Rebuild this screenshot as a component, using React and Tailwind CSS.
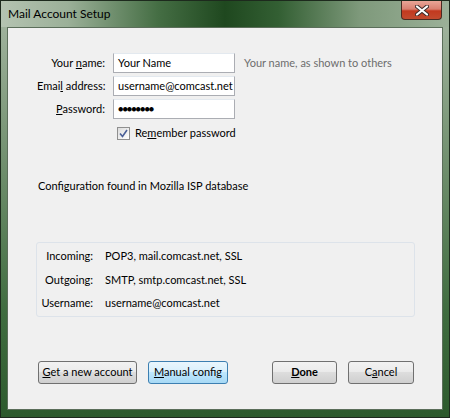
const font = { fontFamily: 'Lato, "Noto Sans", sans-serif' }

function Btn({ children, className = '', hover = false, bold = false }) {
  return (
    <button
      className={`h-[23px] rounded-[3px] border text-[11px] text-black whitespace-nowrap flex items-center justify-center ${
        hover
          ? 'border-[#3c7fb1] bg-[linear-gradient(#eaf6fd_0%,#d9f0fc_45%,#bee6fd_50%,#a7d9f5_100%)]'
          : 'border-[#707070] bg-[linear-gradient(#f2f2f2_0%,#ebebeb_45%,#dddddd_50%,#cfcfcf_100%)]'
      } ${bold ? 'font-bold' : ''} ${className}`}
    >
      {children}
    </button>
  )
}

function Field({ children }) {
  return (
    <div className="h-[20px] w-[122px] border border-[#abadb3] border-t-[#e3e9ef] bg-white flex items-center px-[4px] text-[11px] text-black whitespace-nowrap overflow-hidden">
      {children}
    </div>
  )
}

export default function App() {
  return (
    <div
      className="relative w-[450px] h-[418px] border border-[#1d2a1d] bg-[linear-gradient(180deg,#a7b8a4_0%,#7d987a_30%,#3f6c3f_75%,#2d5a2d_100%)] overflow-hidden"
      style={font}
    >
      {/* title bar */}
      <div className="h-[26px] flex items-center pl-[7px] bg-[linear-gradient(90deg,#b4c3b1_0%,#9bb098_15%,#456e44_35%,#1f481f_50%,#335f33_62%,#7e997b_80%,#9bb098_100%)]">
        <span className="text-[12px] text-black">Mail Account Setup</span>
      </div>
      <div className="absolute top-0 right-[7px] w-[41px] h-[19px] rounded-b-[4px] border border-t-0 border-[#4a2a22] bg-[linear-gradient(180deg,#e9a597_0%,#d98070_45%,#c2391f_55%,#c24a2e_100%)] flex items-center justify-center">
        <svg width="14" height="11" viewBox="0 0 14 11">
          <path d="M2 1.5 L12 9.5 M12 1.5 L2 9.5" stroke="#3a2a28" strokeWidth="4" strokeLinecap="round" />
          <path d="M2 1.5 L12 9.5 M12 1.5 L2 9.5" stroke="#ffffff" strokeWidth="2.2" strokeLinecap="round" />
        </svg>
      </div>

      {/* client area */}
      <div className="mx-[6px] h-[383px] border border-[#5b6e5a] bg-[#f0f0f0] flex flex-col">
        <div className="pt-[25px] pl-[29px] grid grid-cols-[68px_122px_auto] gap-x-[8px] gap-y-[3px] items-center text-[11px]">
          <span className="text-right whitespace-nowrap">Your <u>n</u>ame:</span>
          <Field>Your Name</Field>
          <span className="pl-[1px] text-[#6d6d6d] whitespace-nowrap">Your name, as shown to others</span>

          <span className="text-right whitespace-nowrap">Emai<u>l</u> address:</span>
          <Field>username@comcast.net</Field>
          <span />

          <span className="text-right whitespace-nowrap"><u>P</u>assword:</span>
          <Field>
            <span className="tracking-[-1px] text-[9px]">●●●●●●●●</span>
          </Field>
          <span />
        </div>

        <div className="mt-[6px] pl-[109px] flex items-center gap-[5px] text-[11px]">
          <span className="w-[13px] h-[13px] border border-[#8f8f8f] bg-[linear-gradient(135deg,#dcdcdc,#ffffff)] flex items-center justify-center">
            <svg width="9" height="9" viewBox="0 0 9 9">
              <path d="M1 4.5 L3.5 7.5 L8 1" fill="none" stroke="#4a5f97" strokeWidth="1.6" />
            </svg>
          </span>
          <span>Re<u>m</u>ember password</span>
        </div>

        <div className="mt-[36px] pl-[30px] text-[11px]">Configuration found in Mozilla ISP database</div>

        <div className="mt-[48px] ml-[28px] w-[379px] h-[75px] border border-[#dde3ea] rounded-[3px] pt-[5px] grid grid-cols-[56px_auto] gap-x-[12px] gap-y-[7px] text-[11px] content-start">
          <span className="text-right">Incoming:</span>
          <span>POP3, mail.comcast.net, SSL</span>
          <span className="text-right">Outgoing:</span>
          <span>SMTP, smtp.comcast.net, SSL</span>
          <span className="text-right">Username:</span>
          <span>username@comcast.net</span>
        </div>

        <div className="mt-[44px] pl-[30px] flex items-center">
          <Btn className="w-[99px]"><span><u>G</u>et a new account</span></Btn>
          <Btn hover className="w-[80px] ml-[11px]"><span><u>M</u>anual config</span></Btn>
          <Btn bold className="w-[65px] ml-[44px]"><span><u>D</u>one</span></Btn>
          <Btn className="w-[66px] ml-[11px]"><span>C<u>a</u>ncel</span></Btn>
        </div>
      </div>
    </div>
  )
}
